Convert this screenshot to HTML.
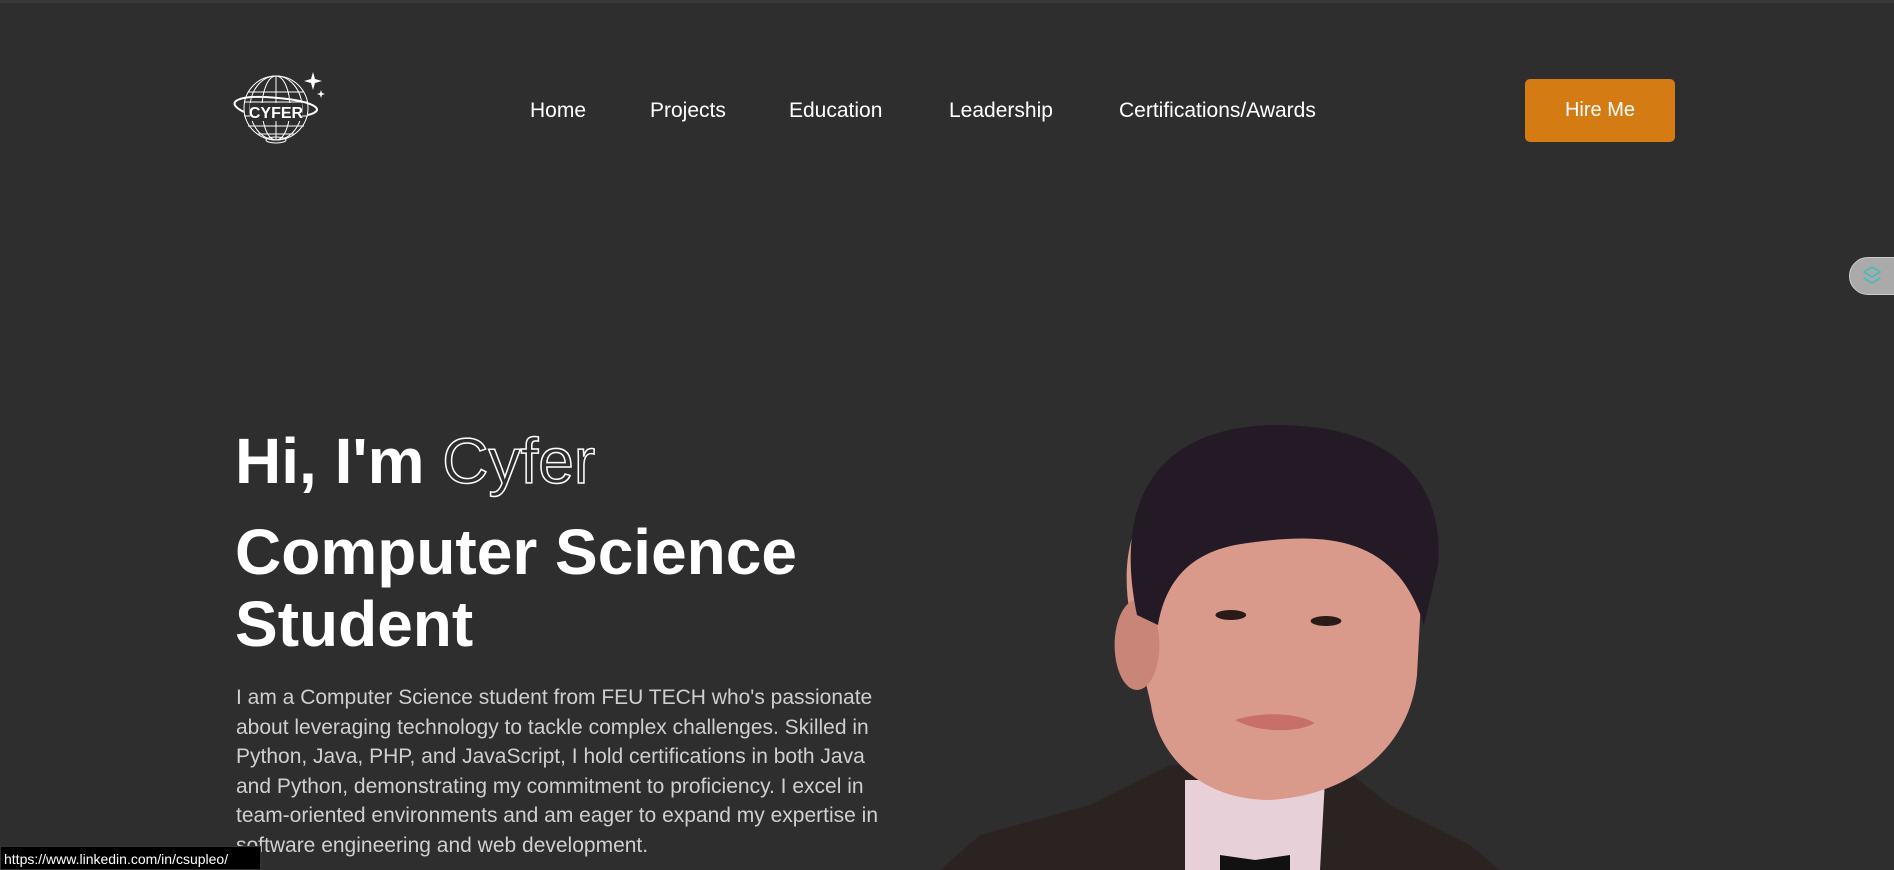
<!DOCTYPE html>
<html><head><meta charset="utf-8"><style>
*{margin:0;padding:0;box-sizing:border-box}
html,body{width:1894px;height:870px;overflow:hidden;background:#2f2e2e;font-family:"Liberation Sans",sans-serif;color:#fff;position:relative}
.top{position:absolute;left:0;top:0;width:1894px;height:3px;background:#3a3939}
.nav a{position:absolute;top:99px;font-size:21px;color:#fff;text-decoration:none}
.btn{position:absolute;left:1525px;top:79px;width:150px;height:63px;background:#d47b14;border-radius:5px;font-size:20px;display:flex;align-items:center;justify-content:center}
.widget{position:absolute;left:1849px;top:257px;width:50px;height:38px;background:#aaa;border-radius:19px 0 0 19px;border:1px solid #ccc}
h1{position:absolute;left:235px;font-weight:bold;font-size:64px;line-height:72px;white-space:nowrap}
.out{color:transparent;-webkit-text-stroke:1.5px #fff;font-weight:normal}
p{position:absolute;left:236px;top:683px;width:668px;font-size:21px;line-height:29.5px;color:#cfcfcf}
.status{position:absolute;left:0;top:846px;width:261px;height:24px;background:#000;color:#fff;font-size:14px;line-height:24px;padding-left:3px;border:1px solid #333}
</style></head><body>
<div class="top"></div>
<svg style="position:absolute;left:228px;top:68px" width="104" height="78" viewBox="0 0 104 78">
<g fill="none" stroke="#fff" stroke-width="1">
<circle cx="48" cy="40" r="32"/>
<ellipse cx="48" cy="40" rx="14" ry="32"/><ellipse cx="48" cy="40" rx="26" ry="32"/>
<line x1="48" y1="8" x2="48" y2="72"/>
<line x1="20" y1="24" x2="76" y2="24"/><line x1="16" y1="34" x2="80" y2="34"/><line x1="16" y1="48" x2="80" y2="48"/><line x1="20" y1="58" x2="76" y2="58"/><line x1="30" y1="66" x2="66" y2="66"/>
<ellipse cx="48" cy="72" rx="10" ry="3"/>
<path d="M16 44 C-5 34 10 26 50 30 C85 33 100 42 80 47" stroke-width="2"/>
</g>
<rect x="22" y="35" width="52" height="18" fill="#2f2e2e"/>
<text x="48" y="50" text-anchor="middle" font-family="Liberation Sans" font-weight="bold" font-size="16" fill="#fff">CYFER</text>
<path d="M85 4 L87 11 L94 13 L87 15 L85 22 L83 15 L76 13 L83 11Z" fill="#fff"/>
<path d="M93 22 L94 25 L97 26 L94 27 L93 30 L92 27 L89 26 L92 25Z" fill="#fff"/>
</svg>
<div class="nav">
<a style="left:530px">Home</a><a style="left:650px">Projects</a><a style="left:789px">Education</a><a style="left:949px">Leadership</a><a style="left:1119px">Certifications/Awards</a>
</div>
<div class="btn">Hire Me</div>
<div class="widget"><svg width="24" height="24" viewBox="0 0 24 24" style="margin:6px 0 0 10px"><path d="M4 8 L12 3 L20 8 L12 13Z M4 14 L12 19 L20 14" fill="none" stroke="#4bb" stroke-width="1.6"/></svg></div>
<h1 style="top:425px">Hi, I'm <span class="out">Cyfer</span></h1>
<h1 style="top:516px">Computer Science</h1>
<h1 style="top:588px">Student</h1>
<p>I am a Computer Science student from FEU TECH who's passionate about leveraging technology to tackle complex challenges. Skilled in Python, Java, PHP, and JavaScript, I hold certifications in both Java and Python, demonstrating my commitment to proficiency. I excel in team-oriented environments and am eager to expand my expertise in software engineering and web development.</p>
<svg style="position:absolute;left:940px;top:415px" width="560" height="455" viewBox="0 0 560 455">
<path d="M0 455 L40 420 L150 390 L230 350 L400 350 L450 390 L530 430 L560 455Z" fill="#2a2322"/>
<path d="M245 365 L245 455 L380 455 L385 365 Z" fill="#e8d0d8"/>
<path d="M280 440 L315 445 L350 440 L350 455 L280 455Z" fill="#111"/>
<g transform="translate(190,0) scale(1.4,1) translate(-190,0)">
<path d="M190 200 C180 120 200 55 270 40 C340 30 400 60 400 130 L395 260 C390 330 350 380 290 385 C240 385 210 340 205 290 Z" fill="#d99a8c"/>
<ellipse cx="195" cy="230" rx="16" ry="45" fill="#c98578"/>
<path d="M195 200 C180 100 200 15 290 10 C380 8 415 70 410 150 L400 210 C380 120 330 115 265 130 C230 140 215 170 210 210 Z" fill="#231a26"/>
<ellipse cx="262" cy="200" rx="11" ry="5" fill="#2a1a18"/><ellipse cx="330" cy="206" rx="11" ry="5" fill="#2a1a18"/>
<path d="M265 305 C285 296 310 298 322 308 C310 318 282 318 265 305Z" fill="#c76f68"/>
</g>
</svg>
<div class="status">https://www.linkedin.com/in/csupleo/</div>
</body></html>
